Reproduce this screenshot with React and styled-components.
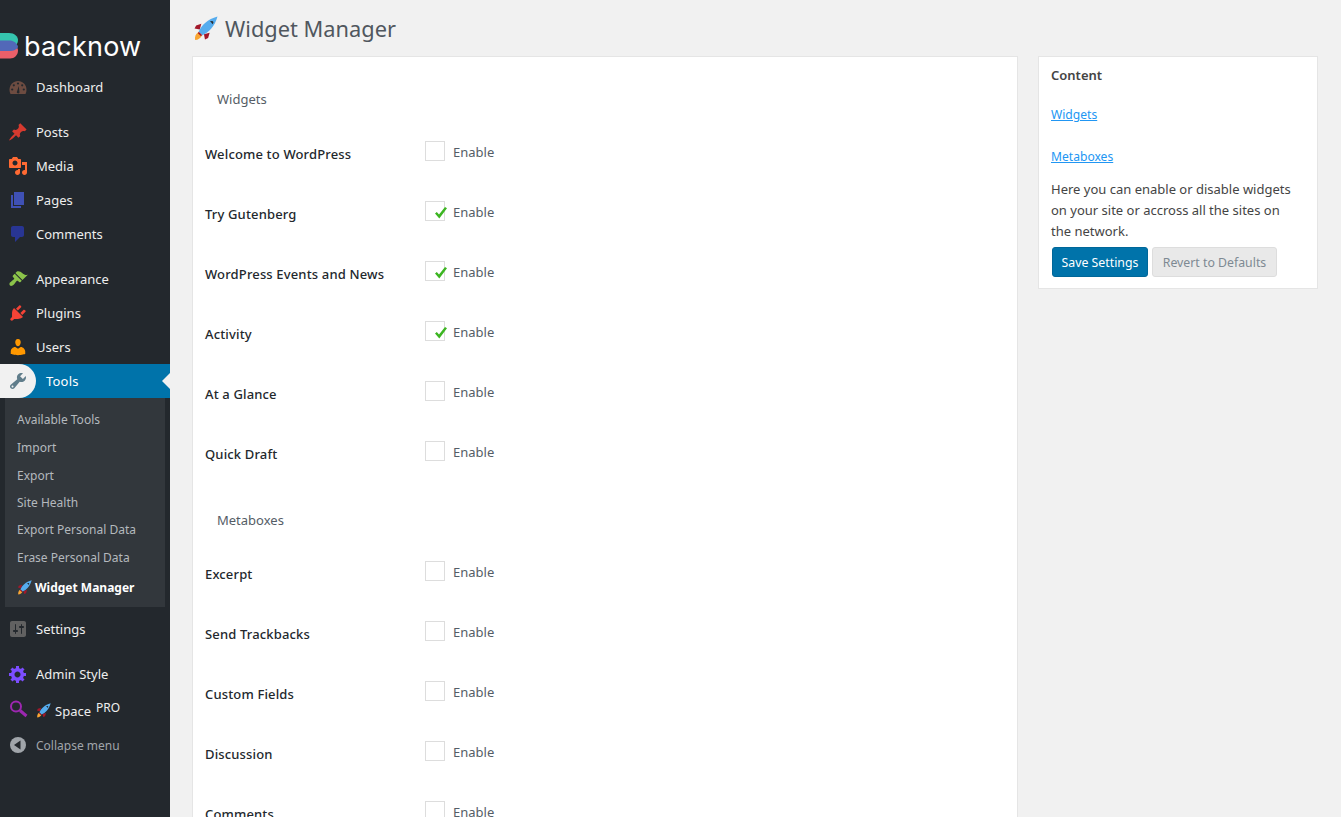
import React from 'react';
import styled, { createGlobalStyle } from 'styled-components';

const GlobalStyle = createGlobalStyle`
  html, body {
    margin: 0;
    height: 100%;
    overflow: hidden;
    background: #f1f1f1;
    font-family: "Noto Sans", "Open Sans", sans-serif;
    font-size: 13px;
    color: #444;
  }
  * { box-sizing: border-box; }
`;

const Page = styled.div`
  display: flex;
  height: 817px;
  overflow: hidden;
`;

const Sidebar = styled.aside`
  flex: 0 0 170px;
  background: #23282d;
  color: #eee;
`;

const Logo = styled.div`
  display: flex;
  align-items: center;
  height: 70px;
  padding-top: 22px;
  gap: 5px;
  span {
    font-family: "Inter", sans-serif;
    font-size: 27px;
    letter-spacing: 0.2px;
    color: #fff;
    line-height: 1;
  }
`;

const Menu = styled.nav`
  display: flex;
  flex-direction: column;
`;

const Item = styled.div`
  display: flex;
  align-items: center;
  height: 34px;
  padding-left: 8px;
  gap: 8px;
  margin-top: ${(p) => p.$gap || 0}px;
  svg { flex: 0 0 20px; }
`;

const Current = styled(Item)`
  position: relative;
  background: #0073aa;
  color: #fff;
  gap: 18px;
  letter-spacing: 0.2px;
  &::before {
    content: '';
    position: absolute;
    left: 0;
    top: 0;
    width: 36px;
    height: 34px;
    background: #f1f1f1;
    border-radius: 0 17px 17px 0;
  }
  svg { position: relative; }
  &::after {
    content: '';
    position: absolute;
    right: 0;
    top: 9px;
    border: 8px solid transparent;
    border-left: 0;
    border-right-color: #f1f1f1;
  }
`;

const SubMenu = styled.div`
  margin: 0 5px;
  background: #32373c;
  padding: 7px 0 5px 12px;
  height: 209px;
  font-size: 12px;
`;

const SubItem = styled.div`
  display: flex;
  align-items: center;
  gap: 3px;
  height: ${(p) => p.$h || 28}px;
  color: ${(p) => (p.$active ? '#fff' : '#b4b9be')};
  font-weight: ${(p) => (p.$active ? 700 : 400)};
`;

const Muted = styled.span`
  color: #a0a5aa;
  font-size: 12px;
`;

const Sup = styled.sup`
  font-size: 12px;
  line-height: 0;
  position: relative;
  top: -3px;
  margin-left: 1px;
`;

const SpaceLabel = styled.span`
  display: flex;
  align-items: center;
  gap: 4px;
  padding-top: 3px;
`;

const Main = styled.main`
  flex: 1;
  padding: 0 23px 0 22px;
  min-width: 0;
`;

const Title = styled.h1`
  display: flex;
  align-items: center;
  gap: 7px;
  height: 56px;
  margin: 0;
  padding: 0 0 0 1px;
  font-size: 21.8px;
  font-weight: 400;
  color: #50575e;
`;

const Columns = styled.div`
  display: grid;
  grid-template-columns: 826px 280px;
  gap: 20px;
  align-items: start;
`;

const Card = styled.section`
  background: #fff;
  border: 1px solid #e5e5e5;
`;

const WidgetCard = styled(Card)`
  padding: 33px 12px 0;
  height: 900px;
`;

const GroupTitle = styled.h2`
  margin: ${(p) => p.$top || 0}px 0 0;
  padding-left: 12px;
  height: ${(p) => p.$h}px;
  font-size: 13px;
  line-height: 18px;
  font-weight: 400;
  color: #555d66;
`;

const Row = styled.div`
  display: grid;
  grid-template-columns: 220px 20px auto;
  height: 60px;
  align-items: start;
`;

const RowLabel = styled.div`
  font-weight: 500;
  letter-spacing: 0.15px;
  color: #23282d;
  line-height: 18px;
  padding-top: 1px;
`;

const Check = styled.span`
  position: relative;
  display: block;
  width: 20px;
  height: 20px;
  margin-top: -3px;
  background: #fff;
  border: 1px solid #ddd;
  svg {
    position: absolute;
    left: 8px;
    top: 4px;
  }
`;

const Enable = styled.span`
  margin: -2px 0 0 8px;
  line-height: 20px;
  color: #555d66;
`;

const SideCard = styled(Card)`
  height: 233px;
  padding: 9px 12px 0;
`;

const SideTitle = styled.h3`
  margin: 0 0 22px;
  font-size: 13px;
  line-height: 18px;
  font-weight: 600;
  color: #444;
`;

const Anchor = styled.a`
  display: block;
  color: #2196f3;
  text-decoration: underline;
  line-height: 18px;
  font-size: 12.1px;
  margin-bottom: 24px;
  &:last-of-type { margin-bottom: 13px; }
`;

const Help = styled.p`
  margin: 0;
  padding-right: 6px;
  line-height: 21px;
  color: #444;
`;

const Buttons = styled.div`
  display: flex;
  gap: 4px;
  margin: 5px 0 0 1px;
`;

const Button = styled.button`
  height: 30px;
  width: ${(p) => p.$w}px;
  padding: 0;
  font: inherit;
  font-size: 12.3px;
  border-radius: 3px;
  border: 1px solid ${(p) => (p.$primary ? '#006799' : '#ddd')};
  background: ${(p) => (p.$primary ? '#0073aa' : '#e9e9e9')};
  color: ${(p) => (p.$primary ? '#fff' : '#7e8993')};
`;

const paths = {
  pin: 'M10.44 3.02l1.82-1.82 6.36 6.35-1.83 1.82c-1.05-.68-2.48-.57-3.41.36l-.75.75c-.92.93-1.04 2.35-.35 3.41l-1.83 1.82-2.41-2.41-2.8 2.79c-.42.42-3.38 2.71-3.8 2.29s1.86-3.39 2.28-3.81l2.79-2.79L4.1 9.36l1.83-1.82c1.05.69 2.48.57 3.4-.36l.75-.75c.93-.92 1.05-2.35.36-3.41z',
  media: 'M13 11V4c0-.55-.45-1-1-1h-1.67L9 1H5L3.67 3H2c-.55 0-1 .45-1 1v7c0 .55.45 1 1 1h10c.55 0 1-.45 1-1zM7 4.500c1.380 0 2.500 1.120 2.500 2.500S8.380 9.500 7 9.500 4.500 8.380 4.500 7 5.620 4.500 7 4.500zM14 6h5v10.500c0 1.380-1.120 2.500-2.500 2.500S14 17.880 14 16.500s1.120-2.500 2.500-2.500c.170 0 .340.020.500.050V9h-3V6zm-4 8.050V13h2v3.500c0 1.380-1.120 2.500-2.500 2.500S7 17.880 7 16.500 8.120 14 9.500 14c.170 0 .340.020.500.050z',
  page: 'M6 15V2h10v13H6zm-1 1h8v2H3V5h2v11z',
  comment: 'M5 2h9c1.100 0 2 .9 2 2v7c0 1.100-.9 2-2 2h-2l-5 5v-5H5c-1.100 0-2-.9-2-2V4c0-1.100.9-2 2-2z',
  brush: 'M14.480 11.060L7.410 3.990l1.500-1.500c.5-.56 2.300-.47 3.510.32 1.210.8 1.430 1.280 2.910 2.100 1.180.64 2.450 1.260 4.450.85zm-.71.71L6.700 4.700 4.930 6.470c-.39.39-.39 1.020 0 1.410l1.060 1.060c.39.39.39 1.030 0 1.420-.6.6-1.430 1.110-2.210 1.690-.35.26-.7.53-1.010.84C1.430 13.230.91 15.080 2 16.500c1.090 1.090 2.760.07 4.110-1.280.31-.31.58-.66.85-1.010.58-.78 1.090-1.610 1.690-2.210.39-.39 1.020-.39 1.410 0l1.060 1.060c.39.39 1.020.39 1.410 0z',
  plug: 'M13.110 4.360L9.870 7.600 8 5.730l3.240-3.240c.35-.34 1.050-.2 1.560.32.52.51.66 1.210.31 1.550zm-8 1.770l.91-1.120 9.010 9.010-1.190.84c-.71.71-2.630 1.160-3.820 1.160H6.140L4.900 17.260c-.59.59-1.540.59-2.120 0-.59-.58-.59-1.530 0-2.120l1.240-1.240v-3.880c0-1.130.4-3.190 1.090-3.890zm7.260 3.970l3.240-3.240c.34-.35 1.040-.21 1.550.31.52.51.66 1.210.31 1.550l-3.240 3.250z',
  users: 'M10 9.250c-2.270 0-2.730-3.440-2.730-3.440C7 4.020 7.820 2 9.970 2c2.160 0 2.980 2.020 2.710 3.810 0 0-.41 3.440-2.680 3.440zm0 2.570L12.720 10c2.390 0 4.520 2.330 4.520 4.530v2.490s-3.650 1.130-7.240 1.130c-3.650 0-7.240-1.130-7.240-1.130v-2.490c0-2.250 1.940-4.480 4.470-4.480z',
  tools: 'M16.680 9.770c-1.340 1.340-3.300 1.670-4.950.99l-5.410 6.520c-.99.99-2.590.99-3.580 0s-.99-2.590 0-3.570l6.520-5.420c-.68-1.650-.35-3.610.99-4.950 1.280-1.280 3.120-1.620 4.720-1.060l-2.890 2.890 2.820 2.820 2.860-2.870c.53 1.580.18 3.390-1.080 4.650zM3.810 16.210c.4.39 1.040.39 1.430 0 .4-.4.4-1.040 0-1.430-.39-.4-1.030-.4-1.430 0-.39.39-.39 1.030 0 1.430z',
  settings: 'M18 16V4c0-1.100-.9-2-2-2H4c-1.100 0-2 .9-2 2v12c0 1.100.9 2 2 2h12c1.100 0 2-.9 2-2zM8 11h1c.55 0 1 .45 1 1s-.45 1-1 1H8v1.500c0 .28-.22.5-.5.5s-.5-.22-.5-.5V13H6c-.55 0-1-.45-1-1s.45-1 1-1h1V5.500c0-.28.22-.5.5-.5s.5.22.5.5V11zm5-2h-1c-.55 0-1-.45-1-1s.45-1 1-1h1V5.500c0-.28.22-.5.5-.5s.5.22.5.5V7h1c.55 0 1 .45 1 1s-.45 1-1 1h-1v5.500c0 .28-.22.5-.5.5s-.5-.22-.5-.5V9z',
  gear: 'M18 12h-2.180c-.17.7-.44 1.350-.81 1.930l1.540 1.540-2.100 2.100-1.540-1.540c-.58.36-1.230.63-1.910.79V19H8v-2.180c-.68-.16-1.330-.43-1.910-.79l-1.540 1.540-2.120-2.120 1.540-1.540c-.36-.58-.63-1.230-.79-1.910H1V9.030h2.170c.16-.7.44-1.350.8-1.940L2.430 5.550l2.100-2.100 1.540 1.540c.58-.37 1.240-.64 1.930-.81V2h3v2.180c.68.16 1.330.43 1.910.79l1.540-1.540 2.120 2.120-1.540 1.540c.36.59.64 1.240.8 1.940H18V12zm-8.500 1.500c1.660 0 3-1.340 3-3s-1.340-3-3-3-3 1.340-3 3 1.340 3 3 3z',
};

const Icon = ({ name, color }) => (
  <svg width="20" height="20" viewBox="0 0 20 20" fill={color}>
    <path fillRule="evenodd" d={paths[name]} />
  </svg>
);

const DashboardIcon = () => (
  <svg width="20" height="20" viewBox="0 0 20 20">
    <path d="M2.500 17C1.800 15.700 1.500 14.300 1.500 12.800 1.500 7.800 5.400 4 10 4s8.500 3.800 8.500 8.800c0 1.500-.3 2.900-1 4.200z" fill="#6d4c41" />
    <g fill="#23282d">
      <circle cx="10" cy="6.500" r="1.100" />
      <circle cx="5.800" cy="8.300" r="1.100" />
      <circle cx="14.200" cy="8.300" r="1.100" />
      <circle cx="4.200" cy="12.500" r="1.100" />
      <circle cx="15.800" cy="12.500" r="1.100" />
      <path d="M9 14.500l1.800-5.500.6 5.700a1.300 1.300 0 1 1-2.400-.2z" />
    </g>
  </svg>
);

const SearchIcon = () => (
  <svg width="20" height="20" viewBox="0 0 20 20" fill="none" stroke="#9c27b0" strokeWidth="2">
    <circle cx="8" cy="7.500" r="5" />
    <path d="M12 11.500l6.500 5.500" strokeWidth="3" />
  </svg>
);

const CollapseIcon = () => (
  <svg width="20" height="20" viewBox="0 0 20 20">
    <circle cx="10" cy="10" r="8" fill="#a0a5aa" />
    <path d="M12.500 5.500v9L6 10z" fill="#23282d" />
  </svg>
);

const Rocket = ({ size }) => (
  <svg width={size} height={size} viewBox="0 0 24 24" style={{ flex: `0 0 ${size}px` }}>
    <path d="M2 23c-.5-3 .5-6 3-7.500l3.500 3.500C7 21.500 5 23 2 23z" fill="#f9a533" />
    <path d="M8 7.500L3 9l-1.500 3 5 1zM16 16l-1.500 5-3 1.500-1-5z" fill="#a2182a" />
    <path d="M5.500 15C8 9 14 3 23.500.5 21 10 15 16 9 18.500z" fill="#55acee" />
    <path d="M16 5.500c1.500-.8 3-.8 3.500 0 .3.8-.2 2-1 2.500-.2-1.200-1-2.200-2.500-2.500z" fill="#292f33" />
    <path d="M5.500 15l3.500 3.500-1.500.8-2.800-2.800z" fill="#a2182a" />
  </svg>
);

const LogoMark = () => (
  <svg width="19" height="26" viewBox="0 0 19 26">
    <path d="M-8 0H9c5.500 0 9 3.500 9 7 0 2.500-1 4-2 5H-8z" fill="#35c4ae" />
    <path d="M-8 13.500H16c1.500 1.500 2 2.500 2 4 0 4.500-3.500 8-8 8H-8z" fill="#ea5f69" />
    <path d="M-8 7.500H9c4 0 7 2 7.500 3.500 1 1 1.500 2 1.500 3-1 2.500-4.500 4-8.500 4H-8z" fill="#5268b8" />
  </svg>
);

const Tick = () => (
  <svg width="14" height="14" viewBox="0 0 14 14">
    <path d="M1 7.500l1.800-1.500L5 8.500 11 1l2 1.300L5.300 12.500z" fill="#3cb521" />
  </svg>
);

const widgets = [
  ['Welcome to WordPress', false],
  ['Try Gutenberg', true],
  ['WordPress Events and News', true],
  ['Activity', true],
  ['At a Glance', false],
  ['Quick Draft', false],
];
const metaboxes = ['Excerpt', 'Send Trackbacks', 'Custom Fields', 'Discussion', 'Comments'];

const WidgetRow = ({ label, on }) => (
  <Row>
    <RowLabel>{label}</RowLabel>
    <Check>{on && <Tick />}</Check>
    <Enable>Enable</Enable>
  </Row>
);

export default function App() {
  return (
    <Page>
      <GlobalStyle />
      <Sidebar>
        <Logo>
          <LogoMark />
          <span>backnow</span>
        </Logo>
        <Menu>
          <Item><DashboardIcon />Dashboard</Item>
          <Item $gap={11}><Icon name="pin" color="#d63a2f" />Posts</Item>
          <Item><Icon name="media" color="#ff6a33" />Media</Item>
          <Item><Icon name="page" color="#3f51b5" />Pages</Item>
          <Item><Icon name="comment" color="#283593" />Comments</Item>
          <Item $gap={11}><Icon name="brush" color="#8bc34a" />Appearance</Item>
          <Item><Icon name="plug" color="#f44336" />Plugins</Item>
          <Item><Icon name="users" color="#ff9800" />Users</Item>
          <Current><Icon name="tools" color="#607d8b" />Tools</Current>
          <SubMenu>
            <SubItem>Available Tools</SubItem>
            <SubItem>Import</SubItem>
            <SubItem>Export</SubItem>
            <SubItem $h={26}>Site Health</SubItem>
            <SubItem>Export Personal Data</SubItem>
            <SubItem>Erase Personal Data</SubItem>
            <SubItem $h={32} $active><Rocket size={15} />Widget Manager</SubItem>
          </SubMenu>
          <Item $gap={5}><Icon name="settings" color="#616161" />Settings</Item>
          <Item $gap={11}><Icon name="gear" color="#7c4dff" />Admin Style</Item>
          <Item $gap={1}>
            <SearchIcon />
            <SpaceLabel><Rocket size={15} />Space<Sup>PRO</Sup></SpaceLabel>
          </Item>
          <Item $gap={2}><CollapseIcon /><Muted>Collapse menu</Muted></Item>
        </Menu>
      </Sidebar>
      <Main>
        <Title><Rocket size={25} />Widget Manager</Title>
        <Columns>
          <WidgetCard>
            <GroupTitle $h={54}>Widgets</GroupTitle>
            {widgets.map(([label, on]) => (
              <WidgetRow key={label} label={label} on={on} />
            ))}
            <GroupTitle $top={7} $h={53}>Metaboxes</GroupTitle>
            {metaboxes.map((label) => (
              <WidgetRow key={label} label={label} />
            ))}
          </WidgetCard>
          <SideCard>
            <SideTitle>Content</SideTitle>
            <Anchor href="#widgets">Widgets</Anchor>
            <Anchor href="#metaboxes">Metaboxes</Anchor>
            <Help>Here you can enable or disable widgets on your site or accross all the sites on the network.</Help>
            <Buttons>
              <Button $primary $w={96}>Save Settings</Button>
              <Button $w={125}>Revert to Defaults</Button>
            </Buttons>
          </SideCard>
        </Columns>
      </Main>
    </Page>
  );
}
